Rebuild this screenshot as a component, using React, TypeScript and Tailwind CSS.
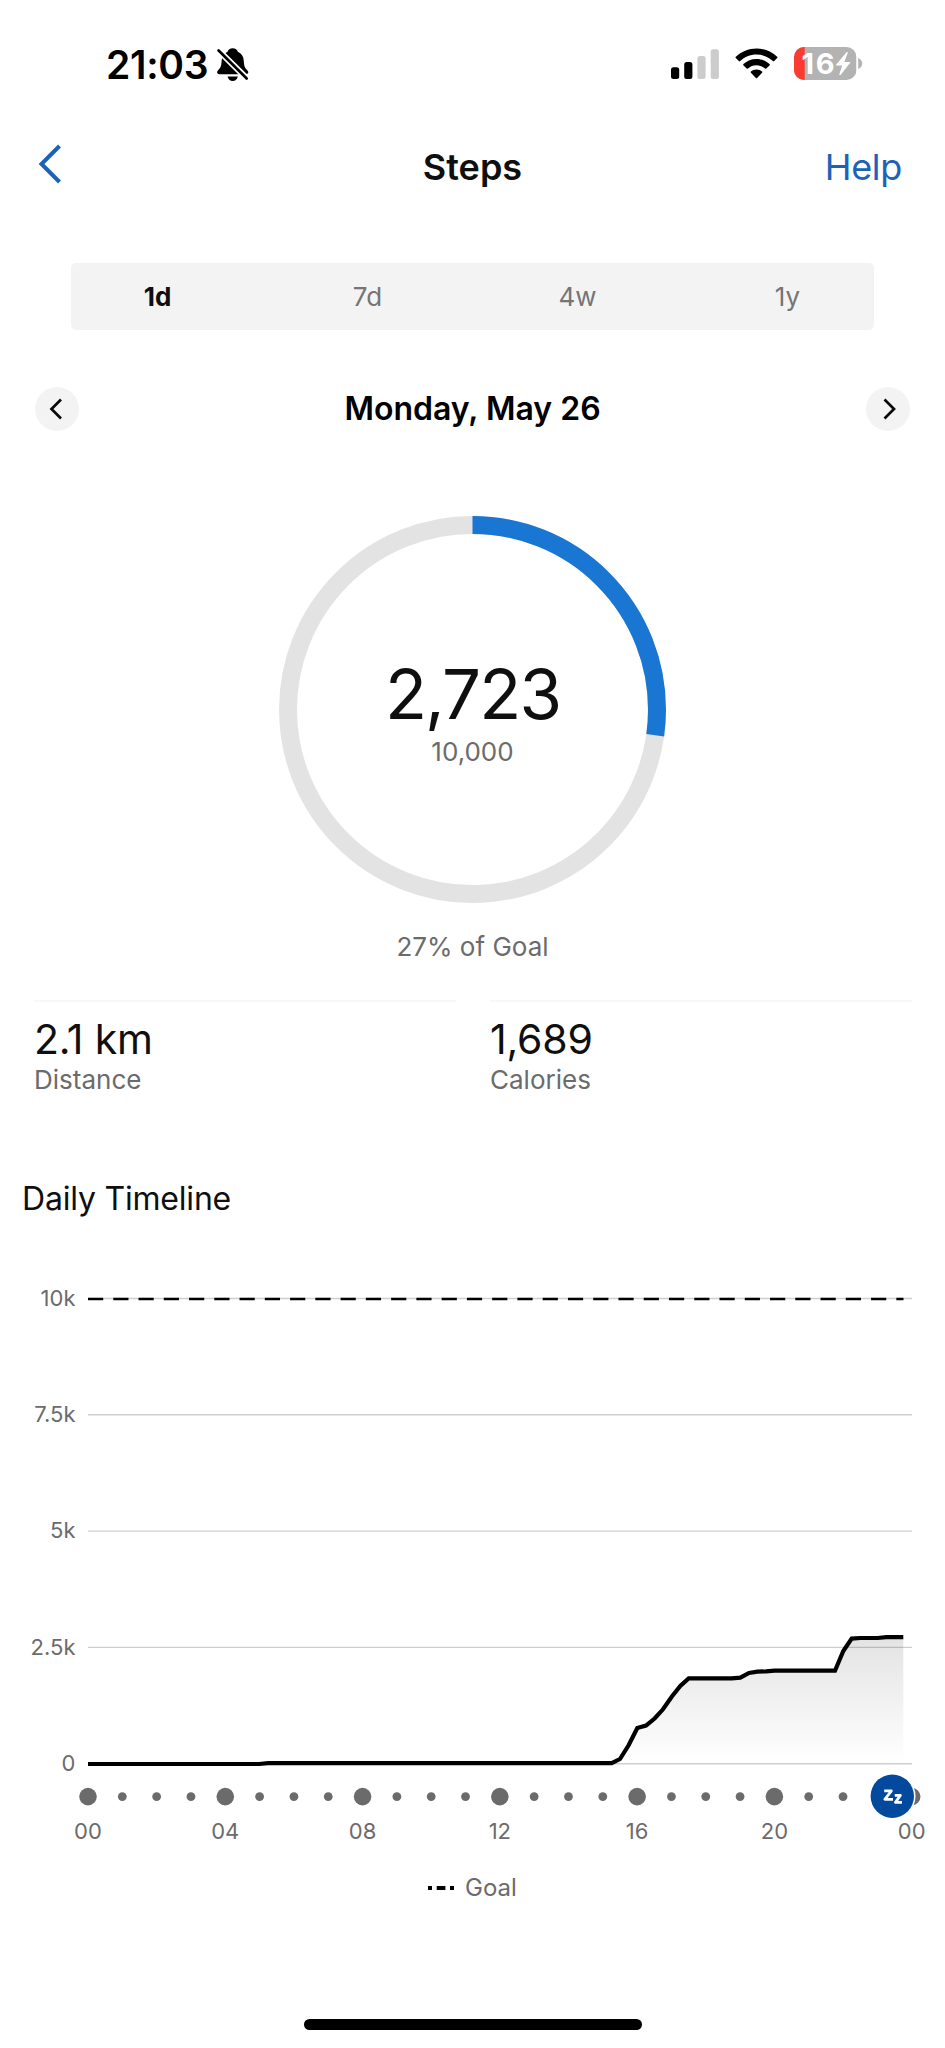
import React from "react";

const MUTED = "#6b6b6b";

const CHART_LEFT = 88;
const HOUR = 34.32;

const hours = Array.from({ length: 25 }, (_, i) => i);
const gridRows = [
  { label: "10k", y: 38.5 },
  { label: "7.5k", y: 154.8 },
  { label: "5k", y: 271.1 },
  { label: "2.5k", y: 387.4 },
  { label: "0", y: 503.8 },
];

const LINE =
  "88,504 259,504 268,503.2 611.7,503.2 620,499 628.6,485.3 637.3,468 646,465.6 654.6,458.5 663,449.3 671.7,436.7 680.3,426 688.7,418.4 731.7,418.4 740.3,417.6 749,413 757.3,411.6 766,411.4 774.6,410.7 835,410.7 843.3,391 851.7,378.6 860.3,378 877.7,378 886.3,377.1 903.3,377.1";

function BellOff() {
  return (
    <svg className="ml-[9px] h-[34px] w-[32px]" viewBox="0 0 32 34">
      <path
        d="M15.700 .3c-2.700 0-4.500 1.500-5.100 3.400-3.700 1.500-5.800 4.700-6 9.200-.2 5.300-1.300 7-3.300 9-.8.800-1.200 1.500-1.200 2.200 0 1.300.9 2.200 2.200 2.200h26.800c1.300 0 2.200-.9 2.200-2.200 0-.7-.4-1.400-1.200-2.200-2-2-3.100-3.700-3.300-9-.2-4.500-2.300-7.700-6-9.200C20.200 1.800 18.400.3 15.700.3z"
        fill="#000"
      />
      <path d="M10.600 28.400h10.200c-.5 2.700-2.400 4.600-5.100 4.600s-4.600-1.900-5.100-4.600z" fill="#000" />
      <path d="M-1.500 -.5L33.500 34" stroke="#fff" strokeWidth="6.200" />
      <path d="M1.600 2.500L29.700 30.500" stroke="#000" strokeWidth="2.600" strokeLinecap="round" />
    </svg>
  );
}

function Signal() {
  return (
    <svg className="h-[30px] w-[49px]" viewBox="0 0 49 30">
      <rect x="0" y="18.200" width="8.200" height="11.800" rx="2.500" fill="#000" />
      <rect x="13.200" y="13" width="8.200" height="17" rx="2.500" fill="#000" />
      <rect x="26.400" y="7" width="8.200" height="23" rx="2.500" fill="#ccc" />
      <rect x="39.700" y="0.300" width="8.200" height="29.700" rx="2.500" fill="#ccc" />
    </svg>
  );
}

function Wifi() {
  return (
    <svg className="ml-[15px] h-[31px] w-[43px]" viewBox="0 0 43 31">
      <path d="M21.500 .5C13.500 .5 6.200 3.600 .8 8.800c-.4.400-.4.900 0 1.300l3 3c.4.400.9.400 1.300 0C9.400 9 15.100 6.500 21.500 6.500S33.600 9 37.900 13.100c.4.400.9.400 1.300 0l3-3c.4-.4.4-.9 0-1.300C36.800 3.600 29.500.5 21.500.5z" />
      <path d="M21.500 11c-5 0-9.600 1.900-13 5.100-.4.400-.4.900 0 1.300l3.200 3.100c.4.400.9.400 1.300 0 2.200-2.100 5.200-3.300 8.500-3.300s6.300 1.200 8.500 3.300c.4.400.9.400 1.300 0l3.200-3.100c.4-.4.4-.9 0-1.300-3.400-3.200-8-5.100-13-5.100z" />
      <path d="M21.500 21.400c-2.200 0-4.200.8-5.600 2.200-.4.400-.4.800 0 1.200l5 5.100c.4.400.8.400 1.200 0l5-5.100c.4-.4.4-.8 0-1.200-1.400-1.400-3.400-2.200-5.600-2.200z" />
    </svg>
  );
}

function Battery() {
  return (
    <svg className="ml-[16px] h-[33px] w-[69px]" viewBox="0 0 69 33">
      <defs>
        <clipPath id="cell">
          <rect x="0" y="0" width="62.500" height="33" rx="10" />
        </clipPath>
      </defs>
      <g clipPath="url(#cell)">
        <rect width="62.500" height="33" fill="#b3b3b3" />
        <rect width="10.700" height="33" fill="#fc3b30" />
      </g>
      <path d="M64.200 11c2.600.9 4 3 4 5.500s-1.400 4.600-4 5.500z" fill="#b3b3b3" />
      <text x="7.600" y="27.200" fontFamily="Inter, sans-serif" fontWeight="700" fontSize="29" textLength="33" fill="#fff">
        16
      </text>
      <path d="M52.500 5.300L42.300 17.500c-.4.500-.1 1 .5 1h5.400L45.300 27.300c-.2.900.6 1.200 1.200.6L56 15.900c.4-.5.100-1-.5-1h-5.200l3.400-8.900c.3-.9-.6-1.400-1.200-.7z" fill="#fff" />
    </svg>
  );
}

function Chevron({ flip = false }: { flip?: boolean }) {
  return (
    <svg className="h-[22px] w-[14px]" viewBox="0 0 14 22" fill="none" stroke="#0a0a0a" strokeWidth="2.700">
      <path d={flip ? "M1.500 1.500L11 11L1.500 20.500" : "M12 1.500L2.500 11L12 20.500"} />
    </svg>
  );
}

function Stat({ value, label }: { value: string; label: string }) {
  return (
    <div className="border-t-2 border-[#f8f8f8] pt-[17px]">
      <div className="text-[41px] leading-[40px] tracking-[-0.2px] text-[#0f0f0f]">{value}</div>
      <div className="mt-[6px] text-[26px] leading-[30px] text-[#6b6b6b]">{label}</div>
    </div>
  );
}

function Timeline() {
  return (
    <svg className="mt-[41px] block h-[600px] w-[945px]" viewBox="0 0 945 600" fontFamily="Inter, sans-serif">
      <defs>
        <linearGradient id="fade" x1="0" y1="377" x2="0" y2="504" gradientUnits="userSpaceOnUse">
          <stop offset="0" stopColor="#000" stopOpacity="0.110" />
          <stop offset="1" stopColor="#000" stopOpacity="0" />
        </linearGradient>
      </defs>
      {gridRows.map((row) => (
        <g key={row.label}>
          <line x1={CHART_LEFT} x2="912" y1={row.y} y2={row.y} stroke="#cfcfcf" strokeWidth="1.400" />
          <text x="75.500" y={row.y + 7.200} textAnchor="end" fontSize="22" fill={MUTED}>
            {row.label}
          </text>
        </g>
      ))}
      <line x1="88" x2="903.500" y1="39" y2="39" stroke="#000" strokeWidth="2.700" strokeDasharray="15.200 10.060" />
      <polygon points={LINE + " 903.3,504"} fill="url(#fade)" />
      <polyline points={LINE} fill="none" stroke="#000" strokeWidth="4.200" />
      {hours.map((h) => (
        <circle
          key={h}
          cx={CHART_LEFT + h * HOUR}
          cy="536.600"
          r={h % 4 === 0 ? 8.8 : 4.4}
          fill={MUTED}
          className={h === 23 ? "hidden" : ""}
        />
      ))}
      <circle cx="892.300" cy="536.200" r="23.200" fill="#fff" />
      <circle cx="892.300" cy="536.200" r="21.700" fill="#034a9f" />
      <path
        d="M884.200 530.800h7.200l-6.600 8.500h8.200M894.800 535.400h5.600l-5 7h6.600"
        fill="none"
        stroke="#fff"
        strokeWidth="2.700"
        strokeLinejoin="round"
      />
      {hours
        .filter((h) => h % 4 === 0)
        .map((h) => (
          <text key={h} x={CHART_LEFT + h * HOUR} y="579.400" textAnchor="middle" fontSize="22" fill={MUTED}>
            {String(h % 24).padStart(2, "0")}
          </text>
        ))}
    </svg>
  );
}

export default function App() {
  return (
    <div className="flex h-[2048px] w-[945px] flex-col overflow-hidden bg-white font-['Inter',sans-serif] text-[#0f0f0f]">
      <div className="flex h-[129px] items-center justify-between pr-[82px] pl-[106px]">
        <div className="flex items-center">
          <span className="text-[39px] leading-none font-semibold tracking-[-0.3px] text-black">21:03</span>
          <BellOff />
        </div>
        <div className="flex items-center pb-[2px]">
          <Signal />
          <Wifi />
          <Battery />
        </div>
      </div>

      <div className="grid h-[76px] grid-cols-3 items-center px-[38px]">
        <svg className="mb-[7px] h-[40px] w-[24px]" viewBox="0 0 24 40" fill="none" stroke="#1b63b6" strokeWidth="4">
          <path d="M21.500 2L3.500 20L21.500 38" />
        </svg>
        <h1 className="text-center text-[36px] leading-none font-semibold">Steps</h1>
        <a className="pr-[5px] text-right text-[36px] leading-none tracking-[-0.3px] text-[#1b63b6]">Help</a>
      </div>

      <div className="mt-[58px] ml-[71px] flex h-[67px] w-[803px] justify-center overflow-hidden rounded-[5px] bg-[#f3f3f3]">
        <div className="grid w-[840px] shrink-0 grid-cols-4 items-center text-center text-[26px] text-[#757575]">
          <span className="font-bold text-[#0f0f0f]">1d</span>
          <span>7d</span>
          <span>4w</span>
          <span>1y</span>
        </div>
      </div>

      <div className="mt-[57px] flex h-[44px] items-center justify-between px-[35px]">
        <button className="flex size-[44px] items-center justify-center rounded-full bg-[#f3f3f3] pr-[2px]">
          <Chevron />
        </button>
        <h2 className="text-[32px] leading-none font-semibold text-black">Monday, May 26</h2>
        <button className="flex size-[44px] items-center justify-center rounded-full bg-[#f3f3f3] pl-[4px]">
          <Chevron flip />
        </button>
      </div>

      <div className="relative mt-[85px] h-[387px] w-[387px] self-center">
        <svg className="h-[387px] w-[387px] -rotate-90" viewBox="0 0 387 387" fill="none" strokeWidth="18">
          <circle cx="193.500" cy="193.500" r="184.500" stroke="#e3e3e3" />
          <circle cx="193.500" cy="193.500" r="184.500" stroke="#1976d2" pathLength="10000" strokeDasharray="2723 10000" />
        </svg>
        <div className="absolute inset-0 flex flex-col items-center pt-[143px]">
          <div className="text-[69px] leading-[70px] tracking-[-1.9px]">2,723</div>
          <div className="mt-[10px] text-[26px] leading-[26px] text-[#6b6b6b]">10,000</div>
        </div>
      </div>
      <div className="mt-[29px] text-center text-[26px] leading-[30px] text-[#6b6b6b]">27% of Goal</div>

      <div className="mt-[38px] grid grid-cols-2 gap-x-[34px] pr-[33px] pl-[34px]">
        <Stat value="2.1 km" label="Distance" />
        <Stat value="1,689" label="Calories" />
      </div>

      <h3 className="mt-[84px] ml-[22px] text-[32px] leading-[40px] tracking-[-0.2px]">Daily Timeline</h3>
      <Timeline />

      <div className="mt-[13px] flex h-[30px] items-center pl-[428px] text-[24px] text-[#6b6b6b]">
        <svg className="mr-[11px] h-[4px] w-[26px]" viewBox="0 0 26 4">
          <path d="M0 0h4v4H0zM8.700 0h8.700v4H8.700zM22 0h4v4h-4z" fill="#000" />
        </svg>
        <span>Goal</span>
      </div>
      <div className="mt-[116px] h-[11px] w-[338px] self-center rounded-full bg-black" />
    </div>
  );
}
